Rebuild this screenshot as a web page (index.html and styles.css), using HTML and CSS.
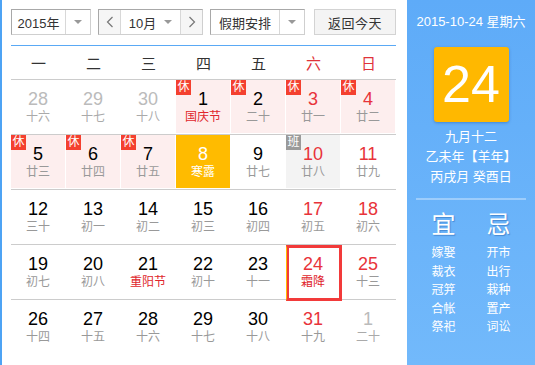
FILE: index.html
```html
<!DOCTYPE html>
<html lang="zh">
<head>
<meta charset="utf-8">
<title>万年历</title>
<link rel="stylesheet" href="styles.css">
</head>
<body>
<div class="cal">
  <div class="main">
    <div class="toolbar">
      <div class="sel sel-year">
        <span class="sel-text">2015年</span>
        <span class="sel-arrow"><i class="tri"></i></span>
      </div>
      <div class="sel sel-month">
        <span class="nav"><svg width="8" height="12" viewBox="0 0 8 12"><polyline points="6.5,1 1.5,6 6.5,11" fill="none" stroke="#777" stroke-width="1.2"/></svg></span>
        <span class="month-text">10月<i class="tri"></i></span>
        <span class="nav nav-r"><svg width="8" height="12" viewBox="0 0 8 12"><polyline points="1.5,1 6.5,6 1.5,11" fill="none" stroke="#777" stroke-width="1.2"/></svg></span>
      </div>
      <div class="sel sel-hol">
        <span class="sel-text">假期安排</span>
        <span class="sel-arrow"><i class="tri"></i></span>
      </div>
      <div class="btn-today">返回今天</div>
    </div>

    <div class="weekdays">
      <span>一</span><span>二</span><span>三</span><span>四</span><span>五</span><span class="we">六</span><span class="we">日</span>
    </div>

    <div class="row">
      <div class="cell other"><b>28</b><em>十六</em></div>
      <div class="cell other"><b>29</b><em>十七</em></div>
      <div class="cell other"><b>30</b><em>十八</em></div>
      <div class="cell rest fest"><span class="badge">休</span><b>1</b><em>国庆节</em></div>
      <div class="cell rest"><span class="badge">休</span><b>2</b><em>二十</em></div>
      <div class="cell rest we"><span class="badge">休</span><b>3</b><em>廿一</em></div>
      <div class="cell rest we"><span class="badge">休</span><b>4</b><em>廿二</em></div>
    </div>
    <div class="row">
      <div class="cell rest"><span class="badge">休</span><b>5</b><em>廿三</em></div>
      <div class="cell rest"><span class="badge">休</span><b>6</b><em>廿四</em></div>
      <div class="cell rest"><span class="badge">休</span><b>7</b><em>廿五</em></div>
      <div class="cell sel-day"><b>8</b><em>寒露</em></div>
      <div class="cell"><b>9</b><em>廿七</em></div>
      <div class="cell work we"><span class="badge badge-work">班</span><b>10</b><em>廿八</em></div>
      <div class="cell we"><b>11</b><em>廿九</em></div>
    </div>
    <div class="row">
      <div class="cell"><b>12</b><em>三十</em></div>
      <div class="cell"><b>13</b><em>初一</em></div>
      <div class="cell"><b>14</b><em>初二</em></div>
      <div class="cell"><b>15</b><em>初三</em></div>
      <div class="cell"><b>16</b><em>初四</em></div>
      <div class="cell we"><b>17</b><em>初五</em></div>
      <div class="cell we"><b>18</b><em>初六</em></div>
    </div>
    <div class="row">
      <div class="cell"><b>19</b><em>初七</em></div>
      <div class="cell"><b>20</b><em>初八</em></div>
      <div class="cell fest"><b>21</b><em>重阳节</em></div>
      <div class="cell"><b>22</b><em>初十</em></div>
      <div class="cell"><b>23</b><em>十一</em></div>
      <div class="cell today we fest"><b>24</b><em>霜降</em></div>
      <div class="cell we"><b>25</b><em>十三</em></div>
    </div>
    <div class="row last">
      <div class="cell"><b>26</b><em>十四</em></div>
      <div class="cell"><b>27</b><em>十五</em></div>
      <div class="cell"><b>28</b><em>十六</em></div>
      <div class="cell"><b>29</b><em>十七</em></div>
      <div class="cell"><b>30</b><em>十八</em></div>
      <div class="cell we"><b>31</b><em>十九</em></div>
      <div class="cell other"><b>1</b><em>二十</em></div>
    </div>
  </div>

  <div class="side">
    <div class="side-date">2015-10-24 星期六</div>
    <div class="big-day">24</div>
    <div class="lunar">
      <div>九月十二</div>
      <div>乙未年【羊年】</div>
      <div>丙戌月 癸酉日</div>
    </div>
    <div class="divider"></div>
    <div class="yiji">
      <div class="col">
        <div class="yj-title">宜</div>
        <div>嫁娶</div><div>裁衣</div><div>冠笄</div><div>合帐</div><div>祭祀</div>
      </div>
      <div class="col">
        <div class="yj-title">忌</div>
        <div>开市</div><div>出行</div><div>栽种</div><div>置产</div><div>词讼</div>
      </div>
    </div>
  </div>
</div>
</body>
</html>
```

FILE: styles.css
```css
* { box-sizing: border-box; }
html, body { margin: 0; padding: 0; background: #fff; }
body {
  font-family: "Liberation Sans", Arial, "Noto Sans CJK SC", sans-serif;
  color: #333;
}
.cal {
  display: flex;
  width: 535px;
  height: 365px;
  border-left: 2px solid #4ea3f4;
  overflow: hidden;
}
.main {
  width: 405px;
  padding: 9px 11px 0 9px;
}
.toolbar {
  display: flex;
  height: 26px;
  font-size: 13px;
}
.sel {
  display: flex;
  height: 26px;
  border: 1px solid;
  border-color: #a8a8a8 #cfcfcf #cfcfcf #a8a8a8;
  background: #fff;
}
.sel-year { width: 80px; margin-right: 7px; }
.sel-month { width: 105px; margin-right: 7px; }
.sel-hol { width: 95px; margin-right: 9px; }
.sel-text {
  flex: 1;
  display: flex;
  align-items: center;
  justify-content: center;
  border-right: 1px solid #d8d8d8;
}
.sel-arrow {
  width: 24px;
  display: flex;
  align-items: center;
  justify-content: center;
}
.tri {
  display: inline-block;
  width: 0;
  height: 0;
  border-left: 4px solid transparent;
  border-right: 4px solid transparent;
  border-top: 4px solid #999;
}
.nav {
  width: 22px;
  display: flex;
  align-items: center;
  justify-content: center;
  background: #f6f6f6;
  border-right: 1px solid #d8d8d8;
}
.nav-r { border-right: 0; border-left: 1px solid #d8d8d8; }
.month-text {
  flex: 1;
  display: flex;
  align-items: center;
  justify-content: center;
  gap: 8px;
}
.btn-today {
  width: 82px;
  height: 26px;
  display: flex;
  align-items: center;
  justify-content: center;
  background: #f4f4f4;
  border: 1px solid #d3d3d3;
  letter-spacing: 0.5px;
}
.weekdays {
  margin-top: 10px;
  height: 35px;
  display: grid;
  grid-template-columns: repeat(7, 55px);
  border-top: 1px solid #5aa9f5;
  border-bottom: 1px solid #cccccc;
  font-size: 15px;
  align-items: center;
  text-align: center;
  color: #333;
}
.weekdays .we { color: #e0333a; }
.row {
  display: grid;
  grid-template-columns: repeat(7, 55px);
  height: 55px;
  border-bottom: 1px solid #cccccc;
}
.row.last { border-bottom: 0; }
.cell {
  position: relative;
  margin: 0 1px 1px 0;
  padding-top: 9px;
  text-align: center;
}
.cell b {
  display: block;
  font-weight: normal;
  font-size: 18px;
  line-height: 20px;
  color: #000;
}
.cell em {
  display: block;
  font-style: normal;
  font-size: 12px;
  line-height: 16px;
  color: #999;
}
.cell.we b { color: #e8333a; }
.cell.other b { color: #bbb; }
.cell.other em { color: #aaa; }
.cell.fest em { color: #e0262c; }
.cell.rest { background: #fdeeee; }
.cell.work { background: #f3f3f3; }
.cell.sel-day { background: #ffbb00; }
.cell.sel-day b, .cell.sel-day em { color: #fff; }
.cell.today {
  margin: 0 -1px -2px 0;
  padding-top: 6px;
  border: 3px solid #f23a3a;
  border-left: 1px solid #ffbb00;
  box-shadow: inset 2px 0 0 #f23a3a;
}
.cell.today b { color: #e8333a; }
.badge {
  position: absolute;
  top: 0;
  left: 0;
  width: 15px;
  height: 15px;
  font-size: 12px;
  line-height: 15px;
  text-align: center;
  color: #fff;
  background: #f4402f;
}
.badge-work { background: #9a9a9a; }

.side {
  width: 128px;
  height: 365px;
  background: linear-gradient(#5eabf8, #72b9fb);
  color: #fff;
  display: flex;
  flex-direction: column;
  align-items: center;
  padding-top: 13px;
}
.side-date {
  font-size: 13px;
  line-height: 18px;
}
.big-day {
  margin-top: 16px;
  width: 75px;
  height: 75px;
  background: #ffb800;
  border-radius: 3px;
  box-shadow: 0 1px 3px rgba(0, 60, 140, 0.35);
  font-size: 52px;
  line-height: 75px;
  text-align: center;
}
.lunar {
  margin-top: 5px;
  font-size: 13px;
  line-height: 20px;
  text-align: center;
}
.divider {
  margin-top: 11px;
  width: 110px;
  height: 2px;
  background: rgba(255, 255, 255, 0.35);
}
.yiji {
  display: flex;
  width: 110px;
  margin-top: 11px;
}
.col {
  width: 55px;
  text-align: center;
  font-size: 12px;
  line-height: 18.5px;
}
.yj-title {
  font-size: 24px;
  line-height: 28px;
  margin-bottom: 5px;
  text-shadow: 1px 1px 1px rgba(0, 60, 140, 0.35);
}
```
